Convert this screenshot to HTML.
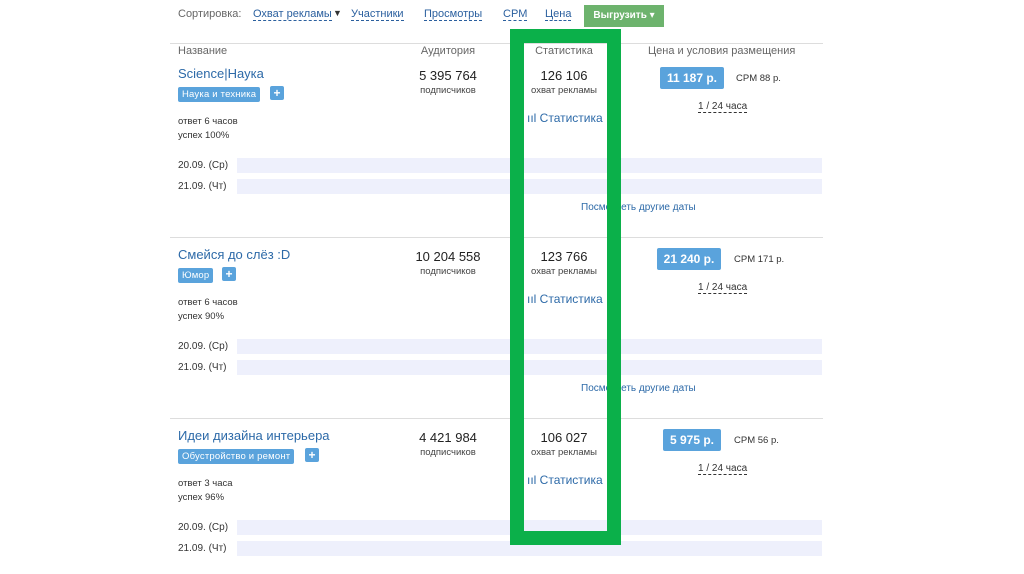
<!DOCTYPE html>
<html><head><meta charset="utf-8"><style>
body{margin:0;width:1024px;height:574px;background:#fff;position:relative;overflow:hidden;font-family:"Liberation Sans","DejaVu Sans",sans-serif;color:#333}
.a{position:absolute;white-space:nowrap}
.lnk{color:#2a5f9e;border-bottom:1px dashed #2a5f9e}
.hd{color:#666;font-size:11px}
.t{color:#2d6aa8;font-size:13px}
.tag{background:#5aa3dc;color:#fff;font-size:9.5px;padding:2px 4px;border-radius:2px;letter-spacing:0.2px}
.pl{background:#5aa3dc;color:#fff;font-size:12px;font-weight:bold;width:14px;height:14px;text-align:center;line-height:14px;border-radius:2px}
.sm{font-size:9.5px;color:#333}
.num{font-size:13px;color:#222;text-align:center;width:100px}
.sub{font-size:9.5px;color:#444;text-align:center;width:100px}
.bar{background:#eef0fc;height:15px;left:237px;width:585px}
.price{background:#5aa3dc;color:#fff;font-size:12px;font-weight:bold;height:22px;line-height:22px;text-align:center;border-radius:2px}
.line{height:1px;background:#ddd;left:170px;width:653px}
</style></head><body>
<div class="a" style="left:178px;top:8px;font-size:11px;color:#666">Сортировка:</div>
<div class="a lnk" style="left:253px;top:8px;font-size:11px">Охват рекламы</div>
<div class="a" style="left:333px;top:8px;font-size:9px">▼</div>
<div class="a lnk" style="left:351px;top:8px;font-size:11px">Участники</div>
<div class="a lnk" style="left:424px;top:8px;font-size:11px">Просмотры</div>
<div class="a lnk" style="left:503px;top:8px;font-size:11px">CPM</div>
<div class="a lnk" style="left:545px;top:8px;font-size:11px">Цена</div>
<div class="a" style="left:584px;top:5px;width:80px;height:22px;background:#6db36d;color:#fff;font-size:10px;font-weight:bold;line-height:22px;text-align:center">Выгрузить ▾</div>
<div class="a line" style="top:43px"></div>
<div class="a hd" style="left:178px;top:45px">Название</div>
<div class="a hd" style="left:398px;top:45px;width:100px;text-align:center">Аудитория</div>
<div class="a hd" style="left:514px;top:45px;width:100px;text-align:center">Статистика</div>
<div class="a hd" style="left:648px;top:45px">Цена и условия размещения</div>

<!-- block 1 -->
<div class="a t" style="left:178px;top:66px">Science|Наука</div>
<div class="a tag" style="left:178px;top:87px">Наука и техника</div>
<div class="a pl" style="left:270px;top:86px">+</div>
<div class="a sm" style="left:178px;top:116px">ответ 6 часов</div>
<div class="a sm" style="left:178px;top:130px">успех 100%</div>
<div class="a num" style="left:398px;top:68px">5 395 764</div>
<div class="a sub" style="left:398px;top:85px">подписчиков</div>
<div class="a num" style="left:514px;top:68px">126 106</div>
<div class="a sub" style="left:514px;top:85px">охват рекламы</div>
<div class="a" style="left:527px;top:111px;font-size:12px;color:#2d6aa8">ııl Статистика</div>
<div class="a price" style="left:660px;top:67px;width:64px">11 187 р.</div>
<div class="a sm" style="left:736px;top:73px">CPM 88 р.</div>
<div class="a" style="left:698px;top:101px;font-size:10px;border-bottom:1px dashed #333">1 / 24 часа</div>
<div class="a sm" style="left:178px;top:160px;font-size:10px">20.09. (Ср)</div>
<div class="a bar" style="top:158px"></div>
<div class="a sm" style="left:178px;top:181px;font-size:10px">21.09. (Чт)</div>
<div class="a bar" style="top:179px"></div>
<div class="a" style="left:581px;top:202px;font-size:10px;color:#2d6aa8">Посмотреть другие даты</div>
<div class="a line" style="top:237px"></div>

<!-- block 2 -->
<div class="a t" style="left:178px;top:247px">Смейся до слёз :D</div>
<div class="a tag" style="left:178px;top:268px">Юмор</div>
<div class="a pl" style="left:222px;top:267px">+</div>
<div class="a sm" style="left:178px;top:297px">ответ 6 часов</div>
<div class="a sm" style="left:178px;top:311px">успех 90%</div>
<div class="a num" style="left:398px;top:249px">10 204 558</div>
<div class="a sub" style="left:398px;top:266px">подписчиков</div>
<div class="a num" style="left:514px;top:249px">123 766</div>
<div class="a sub" style="left:514px;top:266px">охват рекламы</div>
<div class="a" style="left:527px;top:292px;font-size:12px;color:#2d6aa8">ııl Статистика</div>
<div class="a price" style="left:657px;top:248px;width:64px">21 240 р.</div>
<div class="a sm" style="left:734px;top:254px">CPM 171 р.</div>
<div class="a" style="left:698px;top:282px;font-size:10px;border-bottom:1px dashed #333">1 / 24 часа</div>
<div class="a sm" style="left:178px;top:341px;font-size:10px">20.09. (Ср)</div>
<div class="a bar" style="top:339px"></div>
<div class="a sm" style="left:178px;top:362px;font-size:10px">21.09. (Чт)</div>
<div class="a bar" style="top:360px"></div>
<div class="a" style="left:581px;top:383px;font-size:10px;color:#2d6aa8">Посмотреть другие даты</div>
<div class="a line" style="top:418px"></div>

<!-- block 3 -->
<div class="a t" style="left:178px;top:428px">Идеи дизайна интерьера</div>
<div class="a tag" style="left:178px;top:449px">Обустройство и ремонт</div>
<div class="a pl" style="left:305px;top:448px">+</div>
<div class="a sm" style="left:178px;top:478px">ответ 3 часа</div>
<div class="a sm" style="left:178px;top:492px">успех 96%</div>
<div class="a num" style="left:398px;top:430px">4 421 984</div>
<div class="a sub" style="left:398px;top:447px">подписчиков</div>
<div class="a num" style="left:514px;top:430px">106 027</div>
<div class="a sub" style="left:514px;top:447px">охват рекламы</div>
<div class="a" style="left:527px;top:473px;font-size:12px;color:#2d6aa8">ııl Статистика</div>
<div class="a price" style="left:663px;top:429px;width:58px">5 975 р.</div>
<div class="a sm" style="left:734px;top:435px">CPM 56 р.</div>
<div class="a" style="left:698px;top:463px;font-size:10px;border-bottom:1px dashed #333">1 / 24 часа</div>
<div class="a sm" style="left:178px;top:522px;font-size:10px">20.09. (Ср)</div>
<div class="a bar" style="top:520px"></div>
<div class="a sm" style="left:178px;top:543px;font-size:10px">21.09. (Чт)</div>
<div class="a bar" style="top:541px"></div>

<!-- green highlight -->
<div class="a" style="left:510px;top:29px;width:83px;height:488px;border:14px solid #0bb04a;background:transparent"></div>
</body></html>
